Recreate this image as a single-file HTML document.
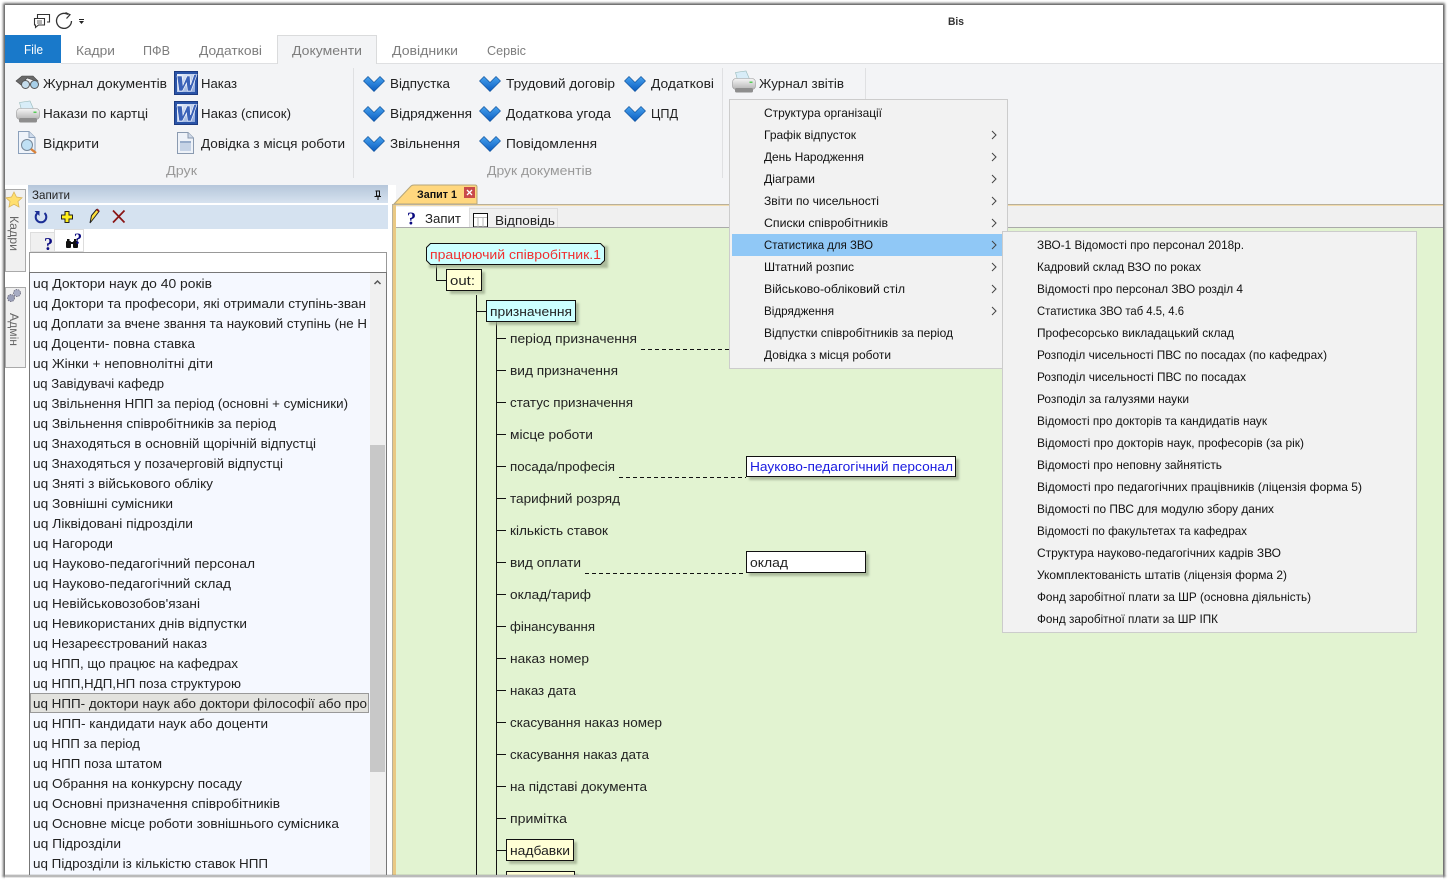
<!DOCTYPE html>
<html><head><meta charset="utf-8"><title>Bis</title>
<style>
html,body{margin:0;padding:0;background:#fff;width:1448px;height:880px;overflow:hidden}
svg{display:block;font-family:"Liberation Sans",sans-serif}
text{font-size:13px;fill:#222;white-space:pre}
.tab{font-size:13px;fill:#7d7d7d}
.grp{font-size:13px;fill:#999}
.m{font-size:12px;fill:#111}
</style></head><body>
<svg xmlns="http://www.w3.org/2000/svg" width="1448" height="880" viewBox="0 0 1448 880">
<defs>
<filter id="b1" x="-1%" y="-1%" width="102%" height="102%"><feGaussianBlur stdDeviation="1.200"/></filter>
<filter id="b2" x="-10%" y="-20%" width="120%" height="140%"><feGaussianBlur stdDeviation="1"/></filter>
<linearGradient id="hdr" x1="0" y1="0" x2="0" y2="1"><stop offset="0" stop-color="#b5c6da"/><stop offset="1" stop-color="#d6e2ef"/></linearGradient>
<linearGradient id="chev" x1="0" y1="0" x2="0" y2="1"><stop offset="0" stop-color="#46a2ee"/><stop offset="1" stop-color="#0a5cc0"/></linearGradient>
<linearGradient id="wd" x1="0" y1="0" x2="1" y2="1"><stop offset="0" stop-color="#eef3fc"/><stop offset="1" stop-color="#8aa6dc"/></linearGradient>
<linearGradient id="pr" x1="0" y1="0" x2="0" y2="1"><stop offset="0" stop-color="#f6f6f6"/><stop offset="1" stop-color="#b4b4b4"/></linearGradient>
<g id="chv"><path d="M.5 5 L5 .5 L11 6.500 L17 .5 L21.500 5 L11 15.500 Z" fill="url(#chev)" stroke="#14569f" stroke-width=".7" stroke-linejoin="round"/></g>
<g id="word"><rect x=".5" y=".5" width="23" height="23" fill="#2a54a8" stroke="#1c3a80"/><rect x="3" y="3" width="18" height="18" fill="url(#wd)"/><path d="M3 5 H8 L9 14 L13 5 H16 L16.500 14 L20 3.500 H23 L17 20 H13.500 L12.500 12 L8.500 20 H5 Z" fill="#3b62b8" stroke="#fff" stroke-width=".6"/></g>
<g id="prn"><path d="M5.500 9 L3.500 1.500 L14 0 L17.500 8 Z" fill="#d8edf8" stroke="#9bb" stroke-width=".6"/><rect x=".5" y="7.500" width="23" height="11" rx="3.500" fill="url(#pr)" stroke="#999" stroke-width=".6"/><rect x="3" y="17" width="18" height="4.500" rx="1.500" fill="#8e8e8e"/><rect x="17.500" y="10.500" width="3" height="1.500" fill="#5c5"/></g>
</defs>

<!-- window -->
<rect x="3.200" y="3.200" width="1441.600" height="873.600" fill="#5a5a5a" filter="url(#b1)"/>
<rect x="5" y="5" width="1438" height="870" fill="#fff"/>

<!-- quick access -->
<g fill="none" stroke="#333" stroke-width="1.100">
<path d="M37.500 18 V14.500 H49.500 V22 H47"  fill="#fff"/>
<path d="M34.500 18.500 H44.500 V25 H38.500 L35.500 27.500 V25 H34.500 Z" fill="#fff"/>
<path d="M37 21 H42 M37 23 H42" stroke-width=".8"/>
<path d="M68 14.500 A7.500 7.500 0 1 0 71.500 21" stroke-width="1.300"/>
<path d="M65.500 12.500 L70 14.700 L66.500 18.500" stroke-width="1.200"/>
</g>
<path d="M79 19 H84 V20 H79 Z M79 21 H84 L81.500 24 Z" fill="#222"/>
<text x="948" y="25" textLength="16" lengthAdjust="spacingAndGlyphs" style="font-size:11px;font-weight:bold;fill:#333">Bis</text>

<!-- tabs row -->
<rect x="5" y="35" width="56" height="28" fill="#1979ca"/>
<text x="24" y="54" textLength="19" lengthAdjust="spacingAndGlyphs" style="fill:#fff">File</text>
<rect x="5" y="63" width="1438" height="142" fill="#f3f4f6"/>
<rect x="61" y="63" width="1382" height="1" fill="#dfe0e2"/>
<path d="M277.500 64 V35.500 H376.500 V64" fill="#f3f4f6" stroke="#dadbdc"/>
<rect x="278" y="62" width="98" height="3" fill="#f3f4f6"/>
<text class="tab" x="76" y="55" textLength="39" lengthAdjust="spacingAndGlyphs">Кадри</text>
<text class="tab" x="143" y="55" textLength="27" lengthAdjust="spacingAndGlyphs">ПФВ</text>
<text class="tab" x="199" y="55" textLength="63" lengthAdjust="spacingAndGlyphs">Додаткові</text>
<text class="tab" x="292" y="55" textLength="70" lengthAdjust="spacingAndGlyphs">Документи</text>
<text class="tab" x="392" y="55" textLength="66" lengthAdjust="spacingAndGlyphs">Довідники</text>
<text class="tab" x="487" y="55" textLength="39" lengthAdjust="spacingAndGlyphs">Сервіс</text>

<!-- ribbon separators -->
<rect x="353" y="68" width="1" height="110" fill="#dfe0e2"/>
<rect x="722" y="68" width="1" height="110" fill="#dfe0e2"/>
<rect x="865" y="68" width="1" height="31" fill="#dfe0e2"/>

<!-- ribbon icons -->
<g>
<path d="M16 81 L22 76 H33 L38 81 L33 80 L27 78 L21 85 Z" fill="#6a6a6a" stroke="#444" stroke-width=".6"/>
<circle cx="25.500" cy="84.500" r="4" fill="#c4dcec" stroke="#555"/><circle cx="34.500" cy="84.500" r="4" fill="#a8cfe8" stroke="#555"/>
<use href="#prn" x="16" y="101"/>
<path d="M18.500 131.500 H29 L35 137.500 V153.500 H18.500 Z" fill="#eef3fa" stroke="#8ba0bb"/><path d="M29 131.500 V137.500 H35" fill="#cfdcec" stroke="#8ba0bb"/>
<circle cx="27" cy="145" r="5.500" fill="#bfe0f4" stroke="#789"/><path d="M31 149 L36 153" stroke="#d9823a" stroke-width="2.400"/>
<use href="#word" x="174" y="71"/><use href="#word" x="174" y="101"/>
<path d="M177.500 132.500 H188 L193.500 138 V153.500 H177.500 Z" fill="#eef2f8" stroke="#8a9ab0"/><path d="M188 132.500 V138 H193.500" fill="#cdd8e8" stroke="#8a9ab0"/><rect x="180" y="141" width="11" height="10" fill="#c6d3e6"/><rect x="180" y="141" width="11" height="2" fill="#98acca"/>
<use href="#chv" x="363" y="76"/><use href="#chv" x="363" y="106"/><use href="#chv" x="363" y="136"/>
<use href="#chv" x="479" y="76"/><use href="#chv" x="479" y="106"/><use href="#chv" x="479" y="136"/>
<use href="#chv" x="624" y="76"/><use href="#chv" x="624" y="106"/>
<use href="#prn" x="732" y="71"/>
</g>

<!-- ribbon text -->
<text x="43" y="88" textLength="124" lengthAdjust="spacingAndGlyphs">Журнал документів</text>
<text x="43" y="118" textLength="105" lengthAdjust="spacingAndGlyphs">Накази по картці</text>
<text x="43" y="148" textLength="56" lengthAdjust="spacingAndGlyphs">Відкрити</text>
<text x="201" y="88" textLength="36" lengthAdjust="spacingAndGlyphs">Наказ</text>
<text x="201" y="118" textLength="90" lengthAdjust="spacingAndGlyphs">Наказ (список)</text>
<text x="201" y="148" textLength="144" lengthAdjust="spacingAndGlyphs">Довідка з місця роботи</text>
<text x="390" y="88" textLength="60" lengthAdjust="spacingAndGlyphs">Відпустка</text>
<text x="390" y="118" textLength="82" lengthAdjust="spacingAndGlyphs">Відрядження</text>
<text x="390" y="148" textLength="70" lengthAdjust="spacingAndGlyphs">Звільнення</text>
<text x="506" y="88" textLength="109" lengthAdjust="spacingAndGlyphs">Трудовий договір</text>
<text x="506" y="118" textLength="105" lengthAdjust="spacingAndGlyphs">Додаткова угода</text>
<text x="506" y="148" textLength="91" lengthAdjust="spacingAndGlyphs">Повідомлення</text>
<text x="651" y="88" textLength="63" lengthAdjust="spacingAndGlyphs">Додаткові</text>
<text x="651" y="118" textLength="27" lengthAdjust="spacingAndGlyphs">ЦПД</text>
<text x="759" y="88" textLength="85" lengthAdjust="spacingAndGlyphs">Журнал звітів</text>
<text class="grp" x="166" y="175" textLength="31" lengthAdjust="spacingAndGlyphs">Друк</text>
<text class="grp" x="487" y="175" textLength="105" lengthAdjust="spacingAndGlyphs">Друк документів</text>

<!-- left strip -->
<rect x="5" y="185" width="385" height="690" fill="#fff"/>
<rect x="5.500" y="189.500" width="20" height="82" fill="#f0f0f0" stroke="#aaa"/>
<rect x="5.500" y="287.500" width="20" height="80" fill="#f0f0f0" stroke="#aaa"/>
<path d="M14 192 L16.500 197 L22 197.800 L18 201.500 L19 207 L14 204.300 L9 207 L10 201.500 L6 197.800 L11.500 197 Z" fill="#ffdf6e" stroke="#d9b45a" stroke-width=".8"/>
<circle cx="11" cy="298" r="3.500" fill="#9a9fb8" stroke="#778" stroke-dasharray="1.500 1"/><circle cx="17" cy="293" r="3.500" fill="#a8adc4" stroke="#778" stroke-dasharray="1.500 1"/>
<text transform="translate(10 216) rotate(90)" textLength="35" lengthAdjust="spacingAndGlyphs" style="font-size:12px;fill:#666">Кадри</text>
<text transform="translate(10 313) rotate(90)" textLength="33" lengthAdjust="spacingAndGlyphs" style="font-size:12px;fill:#666">Адмін</text>

<!-- query panel -->
<rect x="28" y="185" width="360" height="18" fill="url(#hdr)"/>
<text x="32" y="199" textLength="38" lengthAdjust="spacingAndGlyphs" style="font-size:12px">Запити</text>
<path d="M375.500 191 H380 M376.500 191 V196 H379.500 V191 M374.500 196.500 H381 M378 197 V200" stroke="#111" fill="none"/>
<rect x="28" y="205" width="360" height="24" fill="#d5e2f0"/>
<path d="M37.500 213 A5.300 5.300 0 1 0 44.500 213" fill="none" stroke="#1c2f96" stroke-width="2"/><path d="M34.500 211 L39.500 211 L39.500 216 Z" fill="#1c2f96"/>
<path d="M65 211.500 H69 V215 H72.500 V219 H69 V222.500 H65 V219 H61.500 V215 H65 Z" fill="#ffef1a" stroke="#222" stroke-width="1"/>
<path d="M90 223 L91.500 215.500 L96.500 209.500 L99 211.500 L94 218 Z" fill="#ffe03a" stroke="#222"/><path d="M96 210 L97.500 208.500 L99.500 210.500 L98.500 212 Z" fill="#8a1c1c"/>
<path d="M113 210.500 L124.500 222.500 M124.500 210.500 L113 222.500" stroke="#8a1515" stroke-width="1.700"/>
<rect x="30.500" y="232.500" width="24" height="19" fill="#f0f0f0" stroke="#ddd"/>
<rect x="54.500" y="229.500" width="29" height="22" fill="#fff" stroke="#ddd"/>
<text x="44" y="250" style="font-size:18px;font-weight:bold;fill:#0a0a80;font-family:'Liberation Serif',serif">?</text>
<g fill="#111"><rect x="66" y="241" width="5" height="7" rx="1"/><rect x="73" y="241" width="5" height="7" rx="1"/><rect x="70" y="242" width="4" height="2"/><rect x="67" y="239" width="2.500" height="3"/><rect x="74" y="239" width="2.500" height="3"/></g>
<text x="74" y="244" style="font-size:16px;font-weight:bold;fill:#0a0a80;font-family:'Liberation Serif',serif">?</text>
<rect x="29.500" y="252.500" width="357" height="20" fill="#fff" stroke="#999"/>
<rect x="29.500" y="272.500" width="357" height="603" fill="#f5f8ff" stroke="#777"/>
<rect x="370" y="273" width="16" height="602" fill="#f0f0f0"/>
<rect x="370" y="445" width="15" height="327" fill="#c8c8c8"/>
<path d="M374.500 284 L377.500 281 L380.500 284" fill="none" stroke="#555" stroke-width="1.500"/>
<rect x="30.500" y="693.500" width="338" height="19" fill="#e2e2de" stroke="#999"/>

<!-- list -->
<text x="33" y="288" textLength="179" lengthAdjust="spacingAndGlyphs">uq Доктори наук до 40 років</text>
<text x="33" y="308" textLength="333" lengthAdjust="spacingAndGlyphs">uq Доктори та професори, які отримали ступінь-зван</text>
<text x="33" y="328" textLength="334" lengthAdjust="spacingAndGlyphs">uq Доплати за вчене звання та науковий ступінь (не Н</text>
<text x="33" y="348" textLength="162" lengthAdjust="spacingAndGlyphs">uq Доценти- повна ставка</text>
<text x="33" y="368" textLength="180" lengthAdjust="spacingAndGlyphs">uq Жінки + неповнолітні діти</text>
<text x="33" y="388" textLength="131" lengthAdjust="spacingAndGlyphs">uq Завідувачі кафедр</text>
<text x="33" y="408" textLength="315" lengthAdjust="spacingAndGlyphs">uq Звільнення НПП за період (основні + сумісники)</text>
<text x="33" y="428" textLength="243" lengthAdjust="spacingAndGlyphs">uq Звільнення співробітників за період</text>
<text x="33" y="448" textLength="283" lengthAdjust="spacingAndGlyphs">uq Знаходяться в основній щорічній відпустці</text>
<text x="33" y="468" textLength="250" lengthAdjust="spacingAndGlyphs">uq Знаходяться у позачерговій відпустці</text>
<text x="33" y="488" textLength="180" lengthAdjust="spacingAndGlyphs">uq Зняті з військового обліку</text>
<text x="33" y="508" textLength="140" lengthAdjust="spacingAndGlyphs">uq Зовнішні сумісники</text>
<text x="33" y="528" textLength="160" lengthAdjust="spacingAndGlyphs">uq Ліквідовані підрозділи</text>
<text x="33" y="548" textLength="80" lengthAdjust="spacingAndGlyphs">uq Нагороди</text>
<text x="33" y="568" textLength="222" lengthAdjust="spacingAndGlyphs">uq Науково-педагогічний персонал</text>
<text x="33" y="588" textLength="198" lengthAdjust="spacingAndGlyphs">uq Науково-педагогічний склад</text>
<text x="33" y="608" textLength="167" lengthAdjust="spacingAndGlyphs">uq Невійськовозобов'язані</text>
<text x="33" y="628" textLength="214" lengthAdjust="spacingAndGlyphs">uq Невикористаних днів відпустки</text>
<text x="33" y="648" textLength="174" lengthAdjust="spacingAndGlyphs">uq Незареєстрований наказ</text>
<text x="33" y="668" textLength="205" lengthAdjust="spacingAndGlyphs">uq НПП, що працює на кафедрах</text>
<text x="33" y="688" textLength="208" lengthAdjust="spacingAndGlyphs">uq НПП,НДП,НП поза структурою</text>
<text x="33" y="708" textLength="334" lengthAdjust="spacingAndGlyphs">uq НПП- доктори наук або доктори філософії або про</text>
<text x="33" y="728" textLength="235" lengthAdjust="spacingAndGlyphs">uq НПП- кандидати наук або доценти</text>
<text x="33" y="748" textLength="107" lengthAdjust="spacingAndGlyphs">uq НПП за період</text>
<text x="33" y="768" textLength="129" lengthAdjust="spacingAndGlyphs">uq НПП поза штатом</text>
<text x="33" y="788" textLength="209" lengthAdjust="spacingAndGlyphs">uq Обрання на конкурсну посаду</text>
<text x="33" y="808" textLength="247" lengthAdjust="spacingAndGlyphs">uq Основні призначення співробітників</text>
<text x="33" y="828" textLength="306" lengthAdjust="spacingAndGlyphs">uq Основне місце роботи зовнішнього сумісника</text>
<text x="33" y="848" textLength="88" lengthAdjust="spacingAndGlyphs">uq Підрозділи</text>
<text x="33" y="868" textLength="235" lengthAdjust="spacingAndGlyphs">uq Підрозділи із кількістю ставок НПП</text>

<!-- right panel -->
<rect x="390" y="185" width="1053" height="20" fill="#f3f4f6"/>
<rect x="390" y="185" width="6" height="20" fill="#fff"/>
<path d="M394 204 L411 186 Q412 185 414 185 H475 Q477 185 477 187 V204 Z" fill="#ffd77e" stroke="#b5a67a"/>
<text x="417" y="198" textLength="40" lengthAdjust="spacingAndGlyphs" style="font-size:11px;font-weight:bold;fill:#111">Запит 1</text>
<rect x="464" y="187" width="11" height="11" fill="#c94a4a"/>
<path d="M467 190 L472 195 M472 190 L467 195" stroke="#fff" stroke-width="1.300"/>
<rect x="392" y="204" width="1051" height="671" fill="#f0f0f0"/>
<rect x="392" y="204" width="1051" height="1" fill="#b9b09a"/>
<rect x="392" y="205" width="1051" height="1" fill="#f2dcae"/>
<rect x="392" y="205" width="1" height="670" fill="#b9b09a"/>
<rect x="393" y="205" width="3" height="670" fill="#eac983"/>
<rect x="396" y="207" width="73" height="21" fill="#fff"/>
<rect x="469.500" y="208.500" width="88" height="20" fill="#f0f0f0" stroke="#ddd"/>
<text x="407" y="224.500" style="font-size:18px;font-weight:bold;fill:#0a0a80;font-family:'Liberation Serif',serif">?</text>
<text x="425" y="223" textLength="36" lengthAdjust="spacingAndGlyphs">Запит</text>
<rect x="473.500" y="213.500" width="14" height="13.500" fill="#fff" stroke="#111"/><path d="M474 217.500 H487 M478 218 V227 M483 218 V227" stroke="#bbb"/>
<text x="495" y="225" textLength="60" lengthAdjust="spacingAndGlyphs">Відповідь</text>
<rect x="396" y="227" width="1047" height="1" fill="#aaa"/>
<rect x="396" y="228" width="1047" height="647" fill="#e2f3d1"/>

<!-- tree lines -->
<g fill="none" stroke="#111">
<path d="M436.500 265 V280.500 H447"/>
<path d="M476.500 295 V875 M476.500 311.500 H486"/>
<path d="M496.500 322 V875"/>
<path d="M496 338.500 H506 M496 370.500 H506 M496 402.500 H506 M496 434.500 H506 M496 466.500 H506 M496 498.500 H506 M496 530.500 H506 M496 562.500 H506 M496 594.500 H506 M496 626.500 H506 M496 658.500 H506 M496 690.500 H506 M496 722.500 H506 M496 754.500 H506 M496 786.500 H506 M496 818.500 H506 M496 850.500 H506"/>
<path d="M641 349.500 H730 M619 477.500 H746 M585 573.500 H746" stroke-dasharray="4 3"/>
</g>

<!-- tree shadows -->
<g fill="#9fae90" opacity=".8" filter="url(#b2)">
<rect x="429" y="246" width="179" height="22"/>
<rect x="450" y="272" width="35" height="22"/>
<rect x="489" y="303" width="90" height="22"/>
<rect x="749" y="459" width="210" height="21"/>
<rect x="749" y="554" width="120" height="22"/>
<rect x="509" y="842" width="68" height="22"/>
<rect x="509" y="874" width="69" height="6"/>
</g>

<!-- tree nodes -->
<path d="M430.500 243.500 H600.500 L604.500 247.500 V260.500 L600.500 264.500 H430.500 L426.500 260.500 V247.500 Z" fill="#ccffff" stroke="#111"/>
<text x="430" y="259" textLength="171" lengthAdjust="spacingAndGlyphs" style="fill:#f03030">працюючий співробітник.1</text>
<rect x="446.500" y="269.500" width="35" height="21" fill="#ffffd5" stroke="#111"/>
<text x="450" y="285" textLength="25" lengthAdjust="spacingAndGlyphs">out:</text>
<rect x="486.500" y="300.500" width="89" height="21" fill="#ccffff" stroke="#111"/>
<text x="490" y="316" textLength="82" lengthAdjust="spacingAndGlyphs">призначення</text>
<text x="510" y="343" textLength="127" lengthAdjust="spacingAndGlyphs">період призначення</text>
<text x="510" y="375" textLength="108" lengthAdjust="spacingAndGlyphs">вид призначення</text>
<text x="510" y="407" textLength="123" lengthAdjust="spacingAndGlyphs">статус призначення</text>
<text x="510" y="439" textLength="83" lengthAdjust="spacingAndGlyphs">місце роботи</text>
<text x="510" y="471" textLength="105" lengthAdjust="spacingAndGlyphs">посада/професія</text>
<text x="510" y="503" textLength="110" lengthAdjust="spacingAndGlyphs">тарифний розряд</text>
<text x="510" y="535" textLength="98" lengthAdjust="spacingAndGlyphs">кількість ставок</text>
<text x="510" y="567" textLength="71" lengthAdjust="spacingAndGlyphs">вид оплати</text>
<text x="510" y="599" textLength="81" lengthAdjust="spacingAndGlyphs">оклад/тариф</text>
<text x="510" y="631" textLength="85" lengthAdjust="spacingAndGlyphs">фінансування</text>
<text x="510" y="663" textLength="79" lengthAdjust="spacingAndGlyphs">наказ номер</text>
<text x="510" y="695" textLength="66" lengthAdjust="spacingAndGlyphs">наказ дата</text>
<text x="510" y="727" textLength="152" lengthAdjust="spacingAndGlyphs">скасування наказ номер</text>
<text x="510" y="759" textLength="139" lengthAdjust="spacingAndGlyphs">скасування наказ дата</text>
<text x="510" y="791" textLength="137" lengthAdjust="spacingAndGlyphs">на підставі документа</text>
<text x="510" y="823" textLength="57" lengthAdjust="spacingAndGlyphs">примітка</text>
<rect x="506.500" y="839.500" width="67" height="21" fill="#ffffd5" stroke="#111"/>
<text x="510" y="855" textLength="60" lengthAdjust="spacingAndGlyphs">надбавки</text>
<rect x="506.500" y="871.500" width="68" height="8" fill="#ffffd5" stroke="#111"/>
<rect x="746.500" y="456.500" width="209" height="20" fill="#fff" stroke="#111"/>
<text x="750" y="471" textLength="203" lengthAdjust="spacingAndGlyphs" style="fill:#1a1ae0">Науково-педагогічний персонал</text>
<rect x="746.500" y="551.500" width="119" height="21" fill="#fff" stroke="#111"/>
<text x="750" y="567" textLength="38" lengthAdjust="spacingAndGlyphs">оклад</text>

<!-- outer bottom cover -->
<rect x="5" y="875" width="1438" height="5" fill="#fff"/>
<rect x="3" y="875" width="1442" height="2" fill="#7a7a7a" filter="url(#b1)"/>

<!-- menu -->
<rect x="729.500" y="99.500" width="278" height="269" fill="#f2f2f2" stroke="#ccc"/>
<rect x="732" y="234" width="270" height="22" fill="#90c8f6"/>
<text class="m" x="764" y="117" textLength="118" lengthAdjust="spacingAndGlyphs">Структура організації</text>
<text class="m" x="764" y="139" textLength="92" lengthAdjust="spacingAndGlyphs">Графік відпусток</text>
<text class="m" x="764" y="161" textLength="100" lengthAdjust="spacingAndGlyphs">День Народження</text>
<text class="m" x="764" y="183" textLength="51" lengthAdjust="spacingAndGlyphs">Діаграми</text>
<text class="m" x="764" y="205" textLength="115" lengthAdjust="spacingAndGlyphs">Звіти по чисельності</text>
<text class="m" x="764" y="227" textLength="124" lengthAdjust="spacingAndGlyphs">Списки співробітників</text>
<text class="m" x="764" y="249" textLength="109" lengthAdjust="spacingAndGlyphs">Статистика для ЗВО</text>
<text class="m" x="764" y="271" textLength="90" lengthAdjust="spacingAndGlyphs">Штатний розпис</text>
<text class="m" x="764" y="293" textLength="141" lengthAdjust="spacingAndGlyphs">Військово-обліковий стіл</text>
<text class="m" x="764" y="315" textLength="70" lengthAdjust="spacingAndGlyphs">Відрядження</text>
<text class="m" x="764" y="337" textLength="189" lengthAdjust="spacingAndGlyphs">Відпустки співробітників за період</text>
<text class="m" x="764" y="359" textLength="127" lengthAdjust="spacingAndGlyphs">Довідка з місця роботи</text>
<path d="M992 131 L996 135 L992 139 M992 153 L996 157 L992 161 M992 175 L996 179 L992 183 M992 197 L996 201 L992 205 M992 219 L996 223 L992 227 M992 241 L996 245 L992 249 M992 263 L996 267 L992 271 M992 285 L996 289 L992 293 M992 307 L996 311 L992 315" fill="none" stroke="#444"/>

<!-- submenu -->
<rect x="1002.500" y="231.500" width="414" height="401" fill="#f2f2f2" stroke="#ccc"/>
<text class="m" x="1037" y="249" textLength="207" lengthAdjust="spacingAndGlyphs">ЗВО-1 Відомості про персонал 2018р.</text>
<text class="m" x="1037" y="271" textLength="164" lengthAdjust="spacingAndGlyphs">Кадровий склад ВЗО по роках</text>
<text class="m" x="1037" y="293" textLength="206" lengthAdjust="spacingAndGlyphs">Відомості про персонал ЗВО розділ 4</text>
<text class="m" x="1037" y="315" textLength="147" lengthAdjust="spacingAndGlyphs">Статистика ЗВО таб 4.5, 4.6</text>
<text class="m" x="1037" y="337" textLength="197" lengthAdjust="spacingAndGlyphs">Професорсько викладацький склад</text>
<text class="m" x="1037" y="359" textLength="290" lengthAdjust="spacingAndGlyphs">Розподіл чисельності ПВС по посадах (по кафедрах)</text>
<text class="m" x="1037" y="381" textLength="209" lengthAdjust="spacingAndGlyphs">Розподіл чисельності ПВС по посадах</text>
<text class="m" x="1037" y="403" textLength="152" lengthAdjust="spacingAndGlyphs">Розподіл за галузями науки</text>
<text class="m" x="1037" y="425" textLength="230" lengthAdjust="spacingAndGlyphs">Відомості про докторів та кандидатів наук</text>
<text class="m" x="1037" y="447" textLength="267" lengthAdjust="spacingAndGlyphs">Відомості про докторів наук, професорів (за рік)</text>
<text class="m" x="1037" y="469" textLength="185" lengthAdjust="spacingAndGlyphs">Відомості про неповну зайнятість</text>
<text class="m" x="1037" y="491" textLength="325" lengthAdjust="spacingAndGlyphs">Відомості про педагогічних працівників (ліцензія форма 5)</text>
<text class="m" x="1037" y="513" textLength="237" lengthAdjust="spacingAndGlyphs">Відомості по ПВС для модулю збору даних</text>
<text class="m" x="1037" y="535" textLength="210" lengthAdjust="spacingAndGlyphs">Відомості по факультетах та кафедрах</text>
<text class="m" x="1037" y="557" textLength="244" lengthAdjust="spacingAndGlyphs">Структура науково-педагогічних кадрів ЗВО</text>
<text class="m" x="1037" y="579" textLength="250" lengthAdjust="spacingAndGlyphs">Укомплектованість штатів (ліцензія форма 2)</text>
<text class="m" x="1037" y="601" textLength="274" lengthAdjust="spacingAndGlyphs">Фонд заробітної плати за ШР (основна діяльність)</text>
<text class="m" x="1037" y="623" textLength="181" lengthAdjust="spacingAndGlyphs">Фонд заробітної плати за ШР ІПК</text>
</svg>
</body></html>
